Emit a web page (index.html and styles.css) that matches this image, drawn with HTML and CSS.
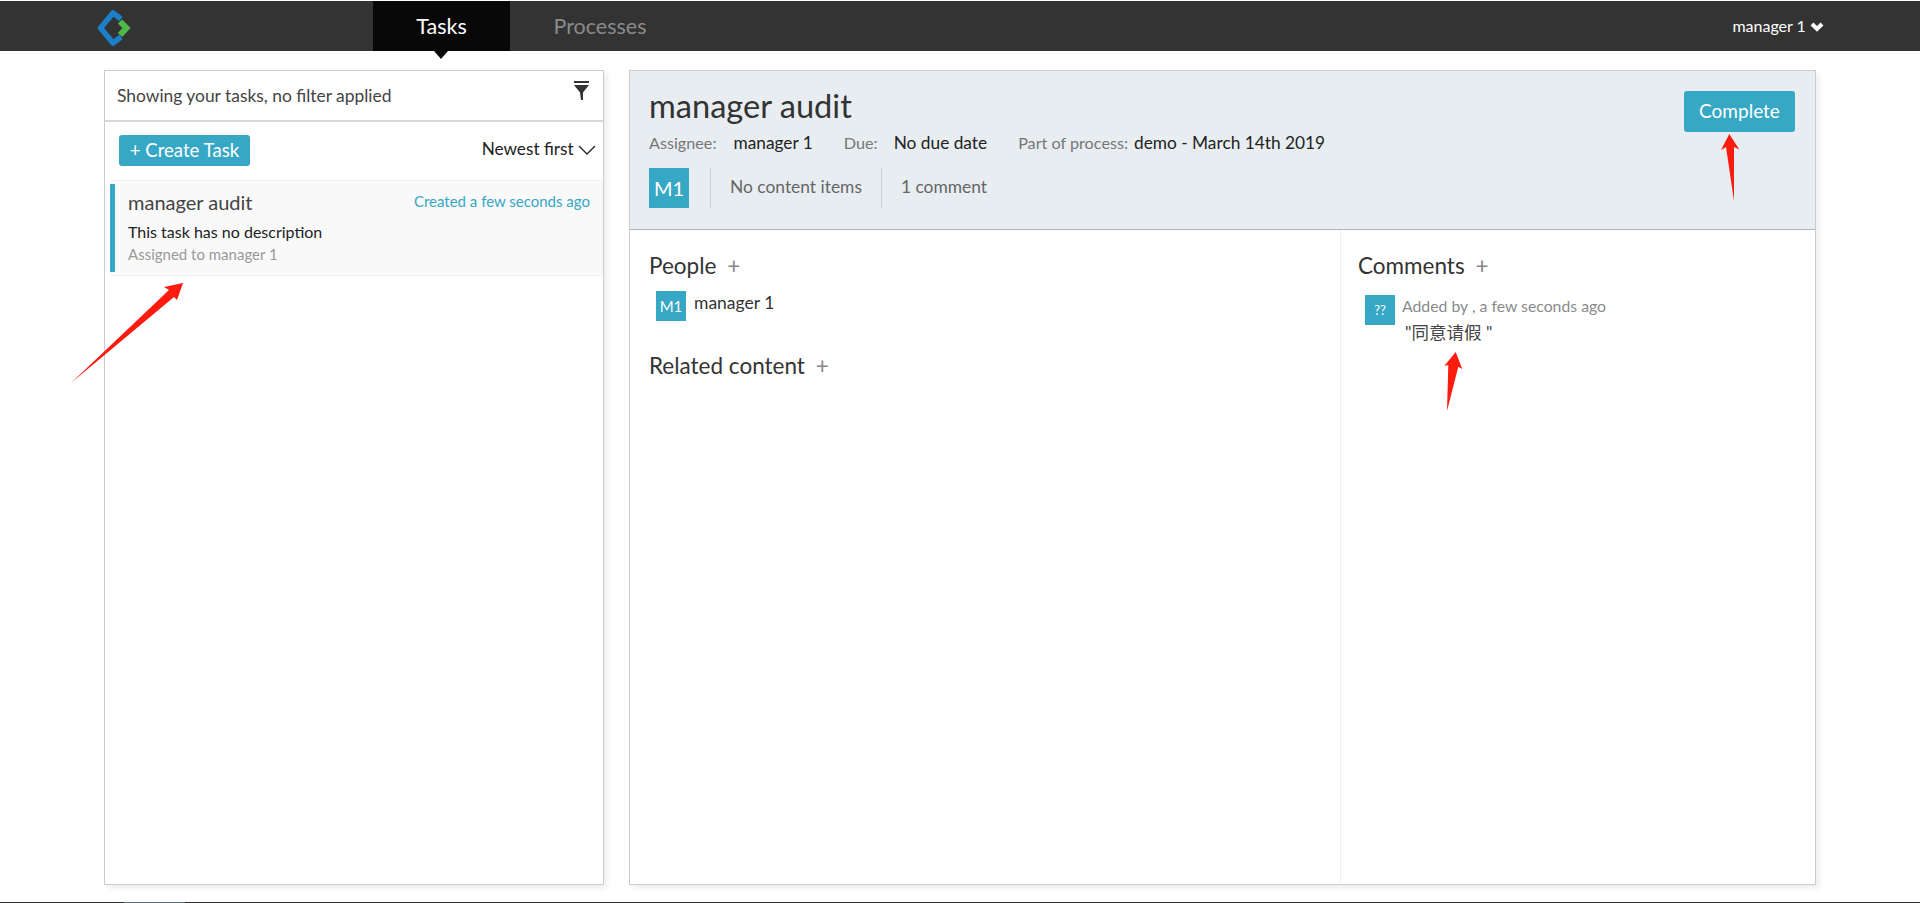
FILE: index.html
```html
<!DOCTYPE html>
<html lang="en">
<head>
    <meta charset="UTF-8">
    <meta name="viewport" content="width=device-width, initial-scale=1.0">
    <title>Tasks</title>
    <link rel="stylesheet" href="styles.css">
</head>
<body>
    <header class="navbar">
        <div class="logo">
            <svg width="34" height="36" viewBox="0 0 34 36">
                <polyline points="24,9 16,3 3.500,18 16,33 24,27" fill="none" stroke="#1c7fc9" stroke-width="5.500" stroke-linejoin="round"/>
                <polyline points="23,11.500 29.500,18 23,25" fill="none" stroke="#4fb848" stroke-width="6"/>
            </svg>
        </div>
        <nav class="nav-tabs">
            <a class="nav-tab active">Tasks</a>
            <a class="nav-tab">Processes</a>
        </nav>
        <div class="user-menu">
            manager 1
            <svg width="14" height="10" viewBox="0 0 14 10">
                <polyline points="2,2 7,7 12,2" fill="none" stroke="#fff" stroke-width="4"/>
            </svg>
        </div>
    </header>

    <main class="content">
        <section class="panel list-panel">
            <div class="filter-bar">
                <span>Showing your tasks, no filter applied</span>
                <svg class="filter-icon" width="15" height="19" viewBox="0 0 15 19">
                    <rect x="0" y="0" width="15" height="2" fill="#333"/>
                    <path d="M0 4H15L9 11.500V19H7L6 11.500Z" fill="#333"/>
                </svg>
            </div>
            <div class="list-actions">
                <button class="btn btn-create">+ Create Task</button>
                <div class="sort">
                    Newest first
                    <svg width="18" height="10" viewBox="0 0 18 10">
                        <polyline points="1,1 9,9 17,1" fill="none" stroke="#222" stroke-width="1.300"/>
                    </svg>
                </div>
            </div>
            <div class="task-item">
                <div class="task-top">
                    <span class="task-name">manager audit</span>
                    <span class="task-created">Created a few seconds ago</span>
                </div>
                <div class="task-desc">This task has no description</div>
                <div class="task-assigned">Assigned to manager 1</div>
            </div>
        </section>

        <section class="panel detail-panel">
            <div class="detail-header">
                <div class="detail-info">
                    <h1>manager audit</h1>
                    <div class="meta">
                        <span class="meta-label">Assignee:</span><span class="meta-value assignee">manager 1</span>
                        <span class="meta-label">Due:</span><span class="meta-value due">No due date</span>
                        <span class="meta-label">Part of process:</span><span class="meta-value process">demo - March 14th 2019</span>
                    </div>
                    <div class="summary">
                        <span class="avatar avatar-lg">M1</span>
                        <span class="summary-item">No content items</span>
                        <span class="summary-item">1 comment</span>
                    </div>
                </div>
                <button class="btn btn-complete">Complete</button>
            </div>
            <div class="detail-body">
                <div class="col-main">
                    <h2>People <span class="add">+</span></h2>
                    <div class="person">
                        <span class="avatar">M1</span>
                        <span class="person-name">manager 1</span>
                    </div>
                    <h2 class="related">Related content <span class="add">+</span></h2>
                </div>
                <div class="col-side">
                    <h2>Comments <span class="add">+</span></h2>
                    <div class="comment">
                        <span class="avatar avatar-unknown">??</span>
                        <div>
                            <div class="comment-by">Added by , a few seconds ago</div>
                            <div class="comment-text">"同意请假 "</div>
                        </div>
                    </div>
                </div>
            </div>
        </section>
    </main>

    <div class="taskbar"><span class="taskbar-item"></span></div>

    <!-- red arrows drawn over the screenshot -->
    <svg class="arrows" width="1920" height="903" viewBox="0 0 1920 903">
        <path d="M71 383L169 290L164 287L183 283L177 300L174 297Z" fill="#fb1b0f"/>
        <path d="M1734 201L1726 147L1721 150L1729.300 134L1739.300 149.500L1734 147Z" fill="#fb1b0f"/>
        <path d="M1447 411L1448.300 365L1444.300 366L1455.700 352L1462.300 369L1458.300 366.700Z" fill="#fb1b0f"/>
    </svg>
</body>
</html>
```

FILE: styles.css
```css
:root {
    --teal: #36a7c4;
    --dark: #333333;
    --border: #cccccc;
    --muted: #8a8a8a;
}

* {
    box-sizing: border-box;
    margin: 0;
    padding: 0;
}

html, body {
    height: 903px;
    overflow: hidden;
}

body {
    font-family: Lato, 'Noto Sans CJK SC', sans-serif;
    color: #333;
    background-color: #fff;
    padding-top: 1px;
    display: flex;
    flex-direction: column;
}

/* Top bar */
.navbar {
    height: 50px;
    flex: none;
    background-color: var(--dark);
    display: flex;
    align-items: stretch;
    position: relative;
}

.logo {
    width: 373px;
    padding: 9px 0 0 97px;
}

.nav-tabs {
    display: flex;
}

.nav-tab {
    width: 180px;
    line-height: 50px;
    text-align: center;
    font-size: 21.500px;
    color: #8a8a8a;
    position: relative;
}

.nav-tab.active {
    width: 137px;
    background-color: #080808;
    color: #fff;
}

.nav-tab.active::after {
    content: '';
    position: absolute;
    left: 61px;
    top: 50px;
    border-left: 7px solid transparent;
    border-right: 7px solid transparent;
    border-top: 8px solid #080808;
}

.user-menu {
    margin-left: auto;
    padding-right: 96px;
    line-height: 50px;
    font-size: 16px;
    color: #fff;
}

/* Main layout */
.content {
    flex: 1;
    display: flex;
    gap: 25px;
    padding: 19px 104px 18px 104px;
    min-height: 0;
}

.panel {
    border: 1px solid var(--border);
    box-shadow: 3px 3px 6px rgba(0, 0, 0, 0.08);
    background-color: #fff;
}

.list-panel {
    width: 500px;
    flex: none;
}

.detail-panel {
    flex: 1;
    display: flex;
    flex-direction: column;
}

/* Task list */
.filter-bar {
    height: 51px;
    border-bottom: 2px solid #d8d8d8;
    padding: 0 14px 0 12px;
    display: flex;
    justify-content: space-between;
    align-items: center;
    font-size: 17.400px;
    color: #444;
}

.filter-icon {
    margin: -10px 0 0 0;
}

.list-actions {
    height: 58px;
    padding: 13px 7px 0 14px;
    display: flex;
    justify-content: space-between;
}

.btn {
    font-family: inherit;
    border: none;
    border-radius: 3px;
    background-color: var(--teal);
    color: #fff;
}

.btn-create {
    width: 131px;
    height: 31px;
    font-size: 18.600px;
    line-height: 28px;
    padding-bottom: 2px;
}

.sort {
    font-size: 17.200px;
    color: #222;
    padding-top: 3px;
}

.task-item {
    height: 96px;
    margin-left: 5px;
    padding: 3px 13px 0 18px;
    background-color: #f9f9f9;
    border-top: 1px solid #f1f1f1;
    border-bottom: 1px solid #f1f1f1;
    position: relative;
}

.task-item::before {
    content: '';
    position: absolute;
    left: 0;
    top: 3px;
    bottom: 3px;
    width: 5px;
    background-color: var(--teal);
}

.task-top {
    display: flex;
    justify-content: space-between;
    padding-top: 6px;
}

.task-name {
    font-size: 20px;
    color: #444;
}

.task-created {
    font-size: 15px;
    padding-top: 2px;
    color: var(--teal);
}

.task-desc {
    font-size: 16px;
    color: #222;
    margin-top: 8px;
}

.task-assigned {
    font-size: 15px;
    color: #999;
    margin-top: 4px;
}

/* Task detail */
.detail-header {
    height: 159px;
    flex: none;
    background-color: #e8edf1;
    border-bottom: 1px solid #aab2bd;
    padding: 20px 20px 0 19px;
    display: flex;
    justify-content: space-between;
}

.detail-info h1 {
    font-size: 32.600px;
    font-weight: 400;
    line-height: 34px;
    margin-top: -2px;
}

.meta {
    display: flex;
    font-size: 17.300px;
    margin-top: 9px;
    color: #222;
}

.meta-label {
    color: #777;
    font-size: 16.200px;
    padding-top: 1px;
}

.assignee {
    margin: 0 31px 0 17px;
}

.due {
    margin: 0 31px 0 16px;
}

.process {
    margin-left: 6px;
}

.summary {
    display: flex;
    align-items: stretch;
    margin-top: 15px;
}

.summary-item {
    font-size: 17.400px;
    color: #666;
    border-left: 1px solid #c8cdd2;
    padding: 8px 19px 0 19px;
}

.avatar {
    width: 30px;
    height: 30px;
    background-color: var(--teal);
    color: #fff;
    font-size: 15px;
    display: flex;
    align-items: center;
    justify-content: center;
    flex: none;
}

.avatar-lg {
    width: 40px;
    height: 40px;
    font-size: 20px;
    margin-right: 21px;
}

.avatar-unknown {
    font-size: 13px;
}

.btn-complete {
    width: 111px;
    height: 41px;
    font-size: 19px;
    padding-bottom: 2px;
}

.detail-body {
    flex: 1;
    display: flex;
}

.col-main {
    width: 711px;
    padding: 22px 0 0 19px;
    border-right: 1px solid #eef0f2;
}

.col-side {
    flex: 1;
    padding: 22px 0 0 17px;
}

h2 {
    font-size: 22.500px;
    font-weight: 400;
    line-height: 28px;
}

.add {
    color: #888;
    margin-left: 5px;
}

.related {
    margin-top: 31px;
}

.person {
    display: flex;
    gap: 8px;
    padding: 11px 0 0 7px;
    font-size: 17.500px;
    line-height: 24px;
}

.comment {
    display: flex;
    gap: 7px;
    padding: 15px 0 0 7px;
}

.comment-by {
    font-size: 15.800px;
    line-height: 22px;
    color: var(--muted);
}

.comment-text {
    font-size: 17.500px;
    color: #444;
    margin: 2px 0 0 3px;
}

.taskbar {
    position: absolute;
    left: 0;
    right: 0;
    bottom: 0;
    height: 1px;
    background-color: #2b2f31;
}

.taskbar-item {
    display: block;
    margin-left: 124px;
    width: 61px;
    height: 1px;
    background-color: #5d6e70;
}

.arrows {
    position: absolute;
    left: 0;
    top: 0;
    pointer-events: none;
}
```
